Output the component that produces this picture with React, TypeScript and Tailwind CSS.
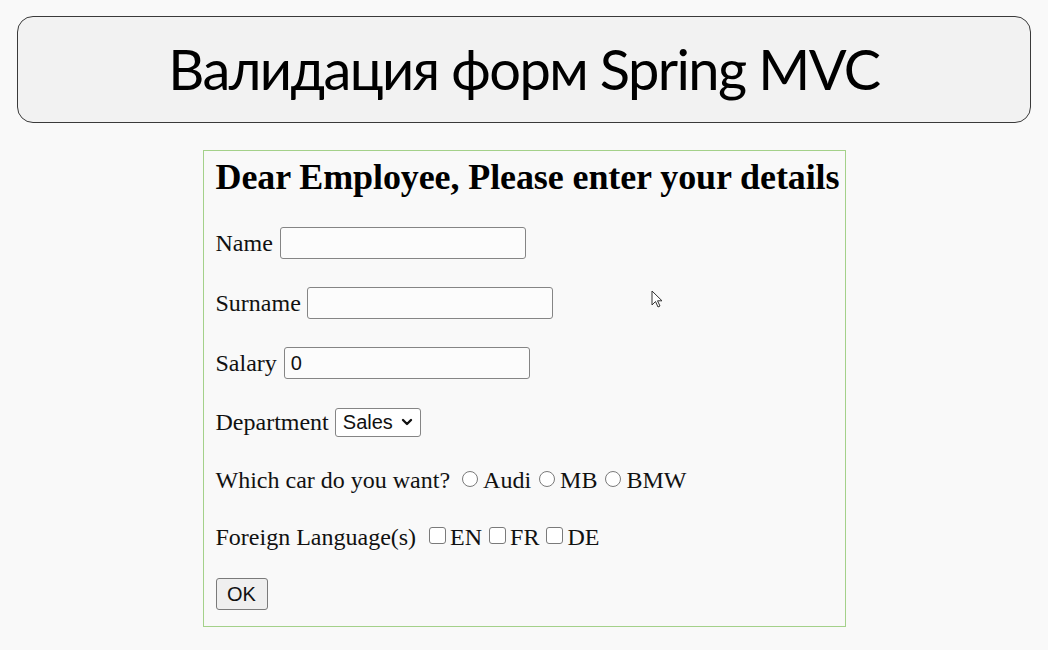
import { ChevronDown } from "lucide-react";

const serif = "font-['Liberation_Serif','Times_New_Roman',serif]";
const sans = "font-['Liberation_Sans',Arial,sans-serif]";

const TextInput = ({ value = "" }: { value?: string }) => (
    <div className={`flex h-[32px] w-[246px] items-center rounded-[3px] border border-[#858585] bg-[#fcfcfc] px-[6px] text-[20px] text-[#111] ${sans}`}>
        {value}
    </div>
);

const Radio = ({ label }: { label: string }) => (
    <span className="flex items-center">
        <span className="ml-[8px] mr-[5px] mt-[-3px] h-[16px] w-[16px] shrink-0 rounded-full border border-[#7a7a7a] bg-white" />
        <span>{label}</span>
    </span>
);

const Check = ({ label }: { label: string }) => (
    <span className="flex items-center">
        <span className="ml-[7px] mr-[4px] mt-[-3px] h-[17px] w-[17px] shrink-0 rounded-[3px] border border-[#7a7a7a] bg-white" />
        <span>{label}</span>
    </span>
);

export default function App() {
    return (
        <div className="relative min-h-[650px] w-[1048px] bg-[#f9f9f9] pt-[16px]">
            <div className="mx-[17px] flex h-[107px] items-center justify-center rounded-[16px] border border-[#3a3a3a] bg-[#f2f2f2]">
                <h1 className="mb-[2px] font-['Lato',sans-serif] text-[56px] leading-none tracking-[-1.6px] text-black">
                    Валидация форм Spring MVC
                </h1>
            </div>

            <div className={`mx-auto mt-[27px] h-[477px] w-[643px] border border-[#a4d18a] pl-[12px] pt-[6px] text-[24px] text-[#111] ${serif}`}>
                <h2 className="h-[40px] whitespace-nowrap text-[36px] font-bold leading-[40px] tracking-[-0.1px] text-black">
                    Dear Employee, Please enter your details
                </h2>

                <div className="mt-[30px] flex h-[32px] items-center gap-[7px]">
                    <span>Name</span>
                    <TextInput />
                </div>
                <div className="mt-[28px] flex h-[32px] items-center gap-[6px]">
                    <span>Surname</span>
                    <TextInput />
                </div>
                <div className="mt-[28px] flex h-[32px] items-center gap-[7px]">
                    <span>Salary</span>
                    <TextInput value="0" />
                </div>
                <div className="mt-[27px] flex h-[32px] items-center gap-[6px]">
                    <span>Department</span>
                    <div className={`flex h-[29px] w-[86px] items-center justify-between rounded-[3px] border border-[#858585] bg-white pl-[7px] pr-[5px] text-[20px] ${sans}`}>
                        <span>Sales</span>
                        <ChevronDown size={16} strokeWidth={3.5} />
                    </div>
                </div>
                <div className="mt-[26px] flex h-[32px] items-center">
                    <span className="mr-[4px]">Which car do you want?</span>
                    <Radio label="Audi" />
                    <Radio label="MB" />
                    <Radio label="BMW" />
                </div>
                <div className="mt-[25px] flex h-[32px] items-center">
                    <span className="mr-[6px]">Foreign Language(s)</span>
                    <Check label="EN" />
                    <Check label="FR" />
                    <Check label="DE" />
                </div>
                <div className="mt-[25px] flex h-[32px] items-center">
                    <button className={`h-[32px] w-[52px] rounded-[3px] border border-[#7a7a7a] bg-[#efefef] text-[20px] text-[#111] ${sans}`}>
                        OK
                    </button>
                </div>
            </div>

            {/* mouse pointer caught in the screenshot */}
            <svg className="absolute left-[651px] top-[290px]" width="14" height="20" viewBox="0 0 14 20">
                <path d="M1 1 L1 15 L4.5 11.5 L7 17 L9 16 L6.5 10.8 L11 10.8 Z" fill="#fff" stroke="#333" strokeWidth="1" strokeLinejoin="round" />
            </svg>
        </div>
    );
}
